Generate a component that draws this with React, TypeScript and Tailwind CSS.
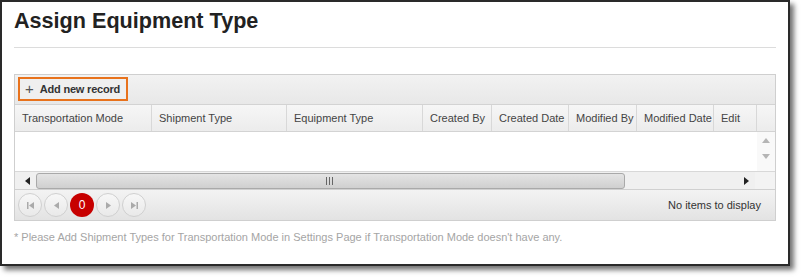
import React from "react";

const cols: { label: string; w: string }[] = [
  { label: "Transportation Mode", w: "w-[137px]" },
  { label: "Shipment Type", w: "w-[135px]" },
  { label: "Equipment Type", w: "w-[136px]" },
  { label: "Created By", w: "w-[69px]" },
  { label: "Created Date", w: "w-[77px]" },
  { label: "Modified By", w: "w-[68px]" },
  { label: "Modified Date", w: "w-[77px]" },
  { label: "Edit", w: "w-[43px]" },
];

function PagerBtn({ children }: { children: React.ReactNode }) {
  return (
    <div className="w-[24px] h-[24px] rounded-full border border-[#d0d0d0] bg-gradient-to-b from-[#f7f7f7] to-[#e9e9e9] flex items-center justify-center">
      {children}
    </div>
  );
}

export default function App() {
  return (
    <div className="w-[803px] h-[280px] bg-white font-['Liberation_Sans',Arial,sans-serif]">
      <div className="w-[790px] h-[266px] border-2 border-[#2a2a2a] bg-white shadow-[4px_4px_5px_rgba(0,0,0,0.55)] pl-[12px] pt-[8px]">
        <h1 className="text-[21.6px] leading-[22px] font-bold text-[#222]">Assign Equipment Type</h1>
        <div className="mt-[15px] w-[762px] h-px bg-[#dcdcdc]" />

        <div className="mt-[26px] w-[762px] border border-[#cfcfcf]">
          {/* toolbar */}
          <div className="h-[30px] bg-gradient-to-b from-[#f2f2f2] to-[#e8e8e8] border-b border-[#d3d3d3] pl-[3px] pt-[2px]">
            <div className="w-[110px] h-[24px] border-2 border-[#e8721c] bg-[#efefef] flex items-center pl-[5px]">
              <span className="text-[15px] leading-none text-[#555] mr-[6px] -mt-[1px]">+</span>
              <span className="text-[11px] font-bold text-[#333] tracking-[-0.2px]">Add new record</span>
            </div>
          </div>
          {/* header */}
          <div className="h-[27px] flex bg-gradient-to-b from-[#f6f6f6] to-[#ececec] border-b border-[#d3d3d3]">
            {cols.map((c) => (
              <div
                key={c.label}
                className={`${c.w} shrink-0 border-r border-[#d8d8d8] pl-[7px] flex items-center text-[11px] text-[#444] whitespace-nowrap`}
              >
                {c.label}
              </div>
            ))}
            <div className="flex-1" />
          </div>
          {/* body */}
          <div className="h-[39px] flex bg-white">
            <div className="flex-1" />
            <div className="w-[18px] bg-[#f9f9f9] flex flex-col items-center pt-[6px] gap-[11px]">
              <svg width="8" height="5" viewBox="0 0 8 5"><path d="M4 0 L8 5 L0 5 Z" fill="#b5b5b5" /></svg>
              <svg width="8" height="5" viewBox="0 0 8 5"><path d="M0 0 L8 0 L4 5 Z" fill="#b5b5b5" /></svg>
            </div>
          </div>
          {/* horizontal scrollbar */}
          <div className="h-[18px] flex items-center bg-[#f0f0f0] border-t border-[#d8d8d8]">
            <div className="w-[21px] flex justify-center pl-[3px]">
              <svg width="5" height="8" viewBox="0 0 5 8"><path d="M5 0 L5 8 L0 4 Z" fill="#222" /></svg>
            </div>
            <div className="w-[589px] h-[16px] rounded-[3px] border border-[#a9a9a9] bg-gradient-to-b from-[#e4e4e4] to-[#cfcfcf] flex items-center justify-center">
              <svg width="8" height="8" viewBox="0 0 8 8" className="ml-[-2px]">
                <rect x="0" y="0" width="1" height="8" fill="#666" />
                <rect x="3" y="0" width="1" height="8" fill="#666" />
                <rect x="6" y="0" width="1" height="8" fill="#666" />
              </svg>
            </div>
            <div className="w-[130px] flex justify-end pr-[6px]">
              <svg width="5" height="8" viewBox="0 0 5 8"><path d="M0 0 L5 4 L0 8 Z" fill="#222" /></svg>
            </div>
            <div className="flex-1 h-full bg-[#f3f3f3]" />
          </div>
          {/* pager */}
          <div className="h-[31px] flex items-center bg-gradient-to-b from-[#f3f3f3] to-[#e3e3e3] border-t border-[#d0d0d0] pl-[3px] pr-[14px]">
            <div className="flex gap-[2px]">
              <PagerBtn>
                <svg width="7" height="7" viewBox="0 0 7 7"><path d="M0 0 H1.5 V7 H0 Z M7 0 V7 L2 3.5 Z" fill="#aaa" /></svg>
              </PagerBtn>
              <PagerBtn>
                <svg width="5" height="7" viewBox="0 0 5 7"><path d="M5 0 V7 L0 3.5 Z" fill="#aaa" /></svg>
              </PagerBtn>
              <div className="w-[24px] h-[24px] rounded-full bg-[#c70000] flex items-center justify-center text-[12px] text-white">0</div>
              <PagerBtn>
                <svg width="5" height="7" viewBox="0 0 5 7"><path d="M0 0 V7 L5 3.5 Z" fill="#aaa" /></svg>
              </PagerBtn>
              <PagerBtn>
                <svg width="7" height="7" viewBox="0 0 7 7"><path d="M0 0 V7 L5 3.5 Z M5.5 0 H7 V7 H5.5 Z" fill="#aaa" /></svg>
              </PagerBtn>
            </div>
            <div className="flex-1" />
            <span className="text-[11px] text-[#333]">No items to display</span>
          </div>
        </div>

        <p className="mt-[10px] text-[11px] leading-[12px] text-[#a5a5a5]">
          * Please Add Shipment Types for Transportation Mode in Settings Page if Transportation Mode doesn't have any.
        </p>
      </div>
    </div>
  );
}
